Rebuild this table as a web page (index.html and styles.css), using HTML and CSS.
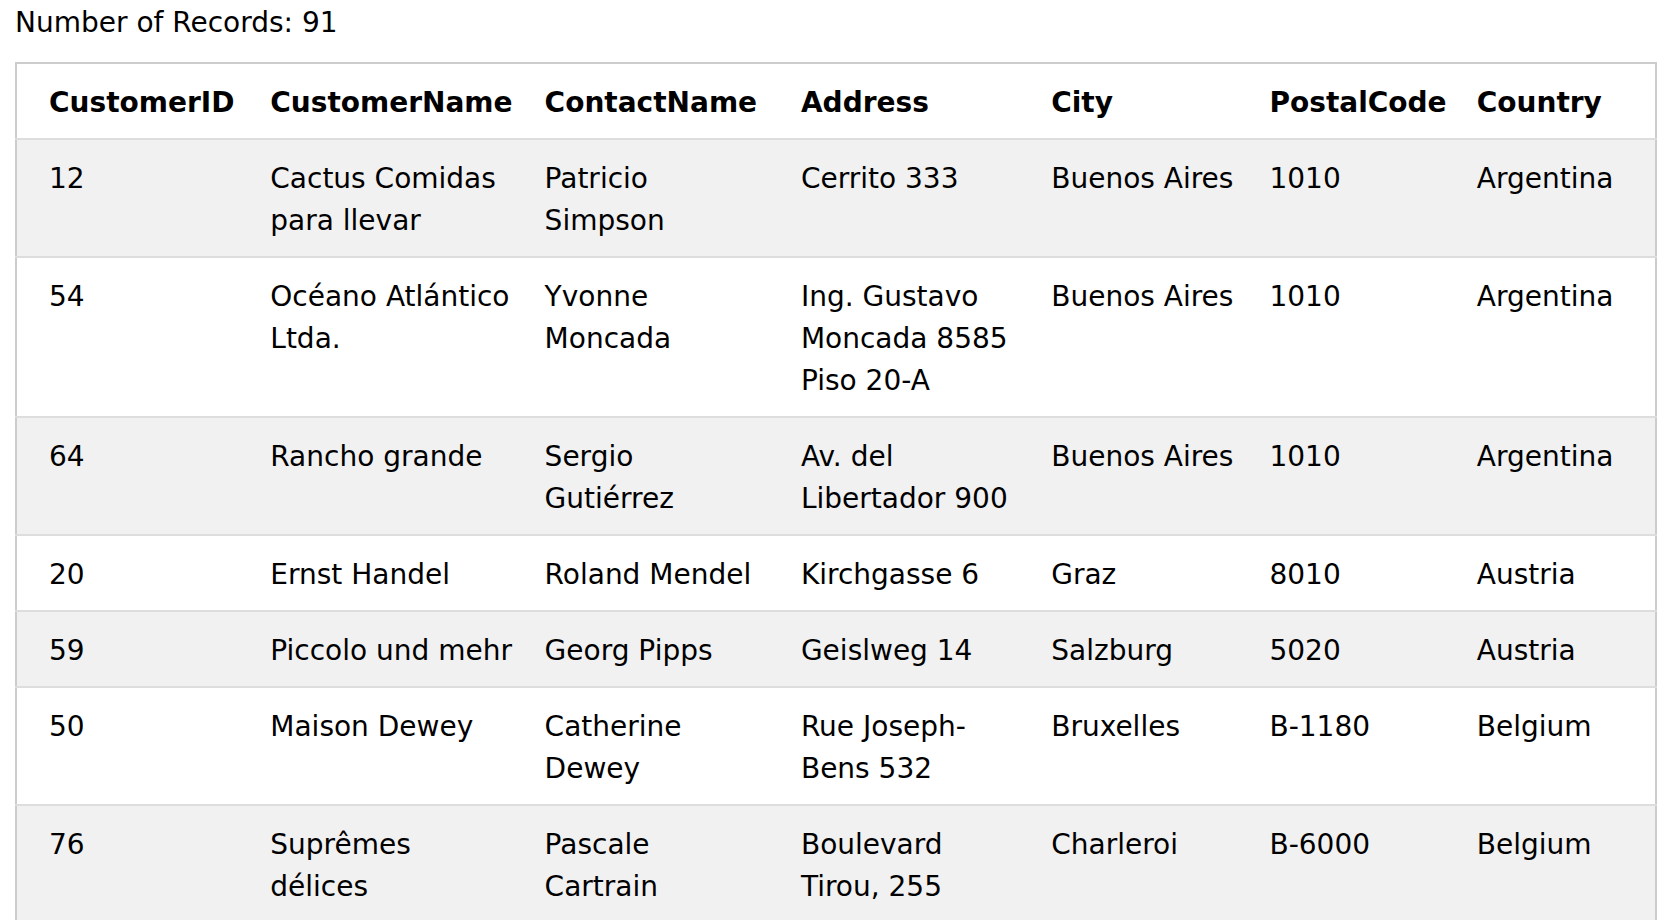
FILE: index.html
```html
<!DOCTYPE html>
<html>
<head>
<meta charset="utf-8">
<link rel="stylesheet" href="styles.css">
</head>
<body>
<div class="page">
  <p class="count">Number of Records: 91</p>
  <table class="customers">
    <colgroup>
      <col class="c-id"><col class="c-name"><col class="c-contact"><col class="c-addr"><col class="c-city"><col class="c-postal"><col class="c-country">
    </colgroup>
    <thead>
      <tr><th>CustomerID</th><th>CustomerName</th><th>ContactName</th><th>Address</th><th>City</th><th>PostalCode</th><th>Country</th></tr>
    </thead>
    <tbody>
      <tr><td>12</td><td>Cactus Comidas para llevar</td><td>Patricio Simpson</td><td>Cerrito 333</td><td>Buenos Aires</td><td>1010</td><td>Argentina</td></tr>
      <tr><td>54</td><td>Océano Atlántico Ltda.</td><td>Yvonne Moncada</td><td>Ing. Gustavo Moncada 8585 Piso 20-A</td><td>Buenos Aires</td><td>1010</td><td>Argentina</td></tr>
      <tr><td>64</td><td>Rancho grande</td><td>Sergio Gutiérrez</td><td>Av. del Libertador 900</td><td>Buenos Aires</td><td>1010</td><td>Argentina</td></tr>
      <tr><td>20</td><td>Ernst Handel</td><td>Roland Mendel</td><td>Kirchgasse 6</td><td>Graz</td><td>8010</td><td>Austria</td></tr>
      <tr><td>59</td><td>Piccolo und mehr</td><td>Georg Pipps</td><td>Geislweg 14</td><td>Salzburg</td><td>5020</td><td>Austria</td></tr>
      <tr><td>50</td><td>Maison Dewey</td><td>Catherine Dewey</td><td>Rue Joseph-Bens 532</td><td>Bruxelles</td><td>B-1180</td><td>Belgium</td></tr>
      <tr><td>76</td><td>Suprêmes délices</td><td>Pascale Cartrain</td><td>Boulevard Tirou, 255</td><td>Charleroi</td><td>B-6000</td><td>Belgium</td></tr>
    </tbody>
  </table>
</div>
</body>
</html>
```

FILE: styles.css
```css
html, body {
  margin: 0;
  padding: 0;
  background: #fff;
}
body {
  font-family: "DejaVu Sans", Verdana, sans-serif;
  font-size: 28px;
  color: #000;
}
.page {
  padding: 0 7px 0 15px;
}
.count {
  margin: 0 0 20px 0;
  padding-top: 4px;
  line-height: 38px;
}
.customers {
  width: 100%;
  table-layout: fixed;
  border-collapse: collapse;
  border: 2px solid #ccc;
  line-height: 42px;
}
.c-id { width: 238px; }
.c-name { width: 274px; }
.c-contact { width: 256px; }
.c-addr { width: 250px; }
.c-city { width: 218px; }
.c-postal { width: 207px; }
.c-country { width: 195px; }
.customers th,
.customers td {
  padding: 18px 16px 14px 16px;
  text-align: left;
  vertical-align: top;
  border-bottom: 2px solid #ddd;
}
.customers th:first-child,
.customers td:first-child {
  padding-left: 32px;
}
.customers th {
  font-weight: bold;
  background: #fff;
}
.customers tbody tr:nth-child(odd) {
  background: #f1f1f1;
}
.customers tbody tr:nth-child(even) {
  background: #fff;
}
```
